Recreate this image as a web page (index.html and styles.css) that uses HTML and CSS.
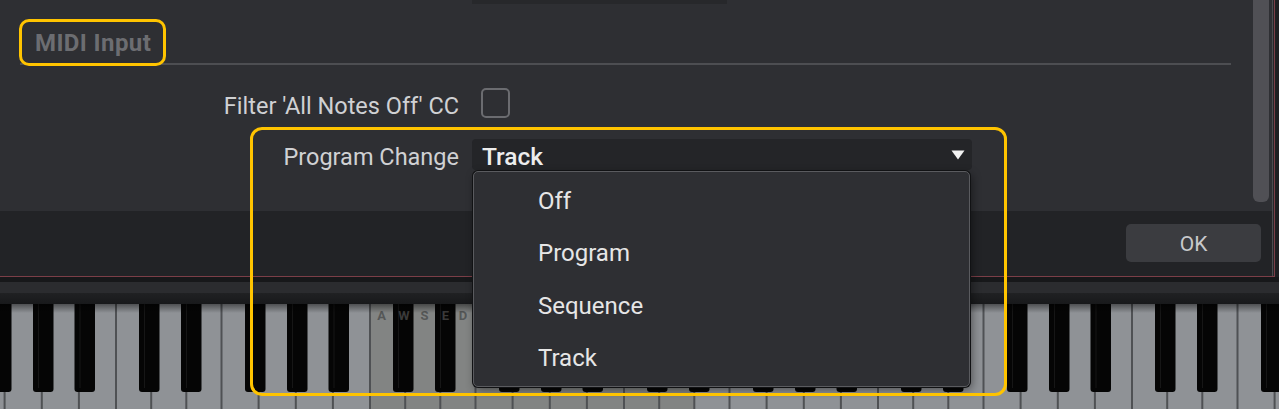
FILE: index.html
```html
<!DOCTYPE html>
<html lang="en">
<head>
<meta charset="utf-8">
<title>MIDI Input settings</title>
<link rel="stylesheet" href="styles.css">
</head>
<body>
<div class="screen">
  <div class="dialog">
    <div class="frame">
      <div class="body-area">
        <div class="main">
          <div class="stub"></div>
          <div class="group-head"><span class="group-title">MIDI Input</span></div>
          <div class="form">
            <div class="form-label">Filter 'All Notes Off' CC</div>
            <div class="check"></div>
            <div class="form-label">Program Change</div>
            <div class="combo">
              <span class="combo-value">Track</span>
              <svg class="arrow" width="14" height="10" viewBox="0 0 14 10"><path d="M0.5 0.5 H13.5 L7 9.5 Z" fill="#f2f2f2"/></svg>
              <div class="popup">
                <div class="item">Off</div>
                <div class="item">Program</div>
                <div class="item">Sequence</div>
                <div class="item">Track</div>
              </div>
            </div>
          </div>
        </div>
        <div class="scroll"></div>
      </div>
      <div class="footer"><button class="ok">OK</button></div>
    </div>
  </div>
  <div class="bezel-a"></div>
  <div class="bezel-b"></div>
  <div class="bezel-c"></div>
  <svg class="keyboard" width="1279" height="105" viewBox="0 0 1279 105">
    <defs>
      <g id="oct">
        <rect class="sep" x="-1" y="0" width="2" height="105"/>
        <rect class="sep" x="34.2" y="0" width="2" height="105"/>
        <rect class="sep" x="69.3" y="0" width="2" height="105"/>
        <rect class="sep" x="104.5" y="0" width="2" height="105"/>
        <rect class="sep" x="141.6" y="0" width="2" height="105"/>
        <rect class="sep" x="178.8" y="0" width="2" height="105"/>
        <rect class="sep" x="215.9" y="0" width="2" height="105"/>
        <rect class="bk" x="23" y="-6" width="20.5" height="94" rx="3"/>
        <rect class="bk" x="65" y="-6" width="20.5" height="94" rx="3"/>
        <rect class="bk" x="129" y="-6" width="20.5" height="94" rx="3"/>
        <rect class="bk" x="171" y="-6" width="20.5" height="94" rx="3"/>
        <rect class="bk" x="212.5" y="-6" width="20.5" height="94" rx="3"/>
        <rect class="bks" x="28" y="0" width="1" height="84"/>
        <rect class="bks" x="70" y="0" width="1" height="84"/>
        <rect class="bks" x="134" y="0" width="1" height="84"/>
        <rect class="bks" x="176" y="0" width="1" height="84"/>
        <rect class="bks" x="217.5" y="0" width="1" height="84"/>
      </g>
      <linearGradient id="shade" x1="0" y1="0" x2="0" y2="1">
        <stop offset="0" stop-color="#000" stop-opacity="0.45"/>
        <stop offset="1" stop-color="#000" stop-opacity="0"/>
      </linearGradient>
    </defs>
    <rect class="wk" x="0" y="0" width="1279" height="105"/>
    <rect class="wk-hl" x="370" y="0" width="324.3" height="105"/>
    <use href="#oct" x="-138"/>
    <use href="#oct" x="116"/>
    <use href="#oct" x="370"/>
    <use href="#oct" x="624"/>
    <use href="#oct" x="878"/>
    <use href="#oct" x="1132"/>
    <text class="lbl" x="381.5" y="16">A</text>
    <text class="lbl lbl-b" x="404" y="16">W</text>
    <text class="lbl" x="424.5" y="16">S</text>
    <text class="lbl lbl-b" x="445.5" y="16">E</text>
    <text class="lbl" x="463" y="16">D</text>
    <rect x="0" y="0" width="1279" height="9" fill="url(#shade)"/>
  </svg>
  <div class="hl hl-title"></div>
  <div class="hl hl-combo"></div>
</div>
</body>
</html>
```

FILE: styles.css
```css
html, body {
  margin: 0;
  padding: 0;
}
body {
  width: 1279px;
  height: 409px;
  overflow: hidden;
  background: #1e1f22;
  font-family: Roboto, "Noto Sans", "Liberation Sans", sans-serif;
}
.screen {
  position: relative;
  width: 1279px;
  height: 409px;
}

/* dialog */
.dialog {
  width: 1275px;
  box-sizing: border-box;
  border-right: 1px solid #7b3e47;
  border-bottom: 1px solid #7b3e47;
  background: #26272a;
}
.frame {
  width: 1273px;
  box-sizing: border-box;
  border-right: 1px solid #4b4c50;
}
.body-area {
  display: flex;
  height: 211px;
  background: #2e2f33;
}
.main {
  flex: 1;
  min-width: 0;
}
.scroll {
  width: 16px;
  height: 202px;
  margin-right: 3px;
  background: #505055;
  border-radius: 0 0 6px 6px;
}
.stub {
  margin-left: 472px;
  width: 255px;
  height: 4px;
  background: #27282b;
}
.group-head {
  margin-left: 20px;
  width: 1196px;
  height: 42px;
  padding: 17px 0 0 15px;
  border-bottom: 2px solid #4d4e52;
  display: flex;
  align-items: center;
}
.group-title {
  font-size: 24px;
  font-weight: 700;
  letter-spacing: 0.4px;
  color: #6c6d71;
  padding-top: 1px;
}
.form {
  display: grid;
  grid-template-columns: 459px 500px;
  column-gap: 13px;
  row-gap: 21px;
  margin-top: 23px;
  align-items: center;
}
.form-label {
  text-align: right;
  font-size: 23.5px;
  color: #d0d1d3;
  line-height: 29px;
  padding-top: 3px;
  margin-bottom: -3px;
}
.check {
  width: 29px;
  height: 30px;
  box-sizing: border-box;
  margin-left: 9px;
  border: 2px solid #6b6c70;
  border-radius: 5px;
}
.combo {
  position: relative;
  height: 31px;
  box-sizing: border-box;
  padding: 0 7px 0 10px;
  background: #242528;
  border-radius: 4px;
  display: flex;
  align-items: center;
  justify-content: space-between;
}
.combo-value {
  font-size: 24.5px;
  font-weight: 500;
  color: #ededed;
  padding-top: 4px;
}
.arrow {
  display: block;
  margin-top: 1px;
}
.popup {
  position: absolute;
  left: 1px;
  top: 32px;
  width: 497px;
  height: 216px;
  box-sizing: border-box;
  padding-top: 3px;
  background: #2e2f33;
  border: 1px solid #5a5b5f;
  border-radius: 5px;
  box-shadow: 0 0 0 1px #111214, 2px 3px 10px rgba(0, 0, 0, 0.45);
  z-index: 5;
}
.item {
  height: 52.3px;
  display: flex;
  align-items: center;
  padding-left: 64px;
  font-size: 24px;
  color: #e6e6e6;
}

/* footer */
.footer {
  height: 65px;
  box-sizing: border-box;
  padding: 13px 11px 0 0;
  background: #222326;
  display: flex;
  justify-content: flex-end;
  align-items: flex-start;
}
.ok {
  width: 135px;
  height: 38px;
  border: none;
  border-radius: 5px;
  background: #3b3c40;
  color: #c8c9cb;
  font-family: Roboto, "Noto Sans", sans-serif;
  font-size: 21px;
  padding: 2px 0 0;
}

/* bezel and keyboard */
.bezel-a {
  height: 5px;
  background: #17181a;
}
.bezel-b {
  height: 11px;
  background: #2b2c2f;
}
.bezel-c {
  height: 11px;
  background: linear-gradient(#202123, #18191b);
}
.keyboard {
  display: block;
}
.wk { fill: #8f9296; }
.wk-hl { fill: #828483; }
.sep { fill: #4f5154; }
.bk { fill: #050505; }
.bks { fill: #161616; }
.lbl {
  font-family: Roboto, "Noto Sans", sans-serif;
  font-size: 13px;
  font-weight: 700;
  fill: #555757;
  text-anchor: middle;
}
.lbl-b { fill: #3a3a3a; }

/* annotation highlights */
.hl {
  position: absolute;
  box-sizing: border-box;
  border: 3px solid #ffc400;
  pointer-events: none;
  z-index: 10;
}
.hl-title {
  left: 19px;
  top: 19px;
  width: 147px;
  height: 47px;
  border-radius: 10px;
}
.hl-combo {
  left: 250px;
  top: 127px;
  width: 757px;
  height: 269px;
  border-radius: 12px;
}
```
